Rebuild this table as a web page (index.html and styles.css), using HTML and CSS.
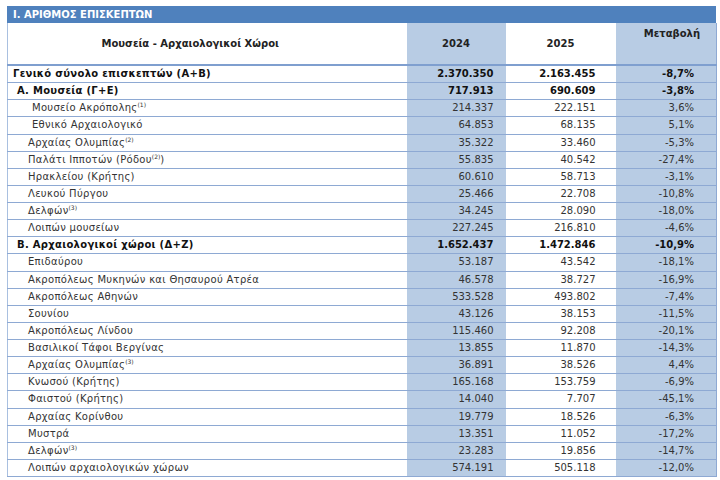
FILE: index.html
```html
<!DOCTYPE html>
<html lang="el">
<head>
<meta charset="utf-8">
<link rel="stylesheet" href="styles.css">
</head>
<body>
<div class="sheet">
  <div class="title">I. ΑΡΙΘΜΟΣ ΕΠΙΣΚΕΠΤΩΝ</div>
  <table class="grid">
    <colgroup>
      <col class="c-name"><col class="c-y1"><col class="c-y2"><col class="c-ch">
    </colgroup>
    <thead>
      <tr class="head">
        <th class="h-name">Μουσεία - Αρχαιολογικοί Χώροι</th>
        <th class="shade">2024</th>
        <th>2025</th>
        <th class="shade h-top">Μεταβολή</th>
      </tr>
    </thead>
    <tbody>
      <tr class="bold"><td class="l0">Γενικό σύνολο επισκεπτών (Α+Β)</td><td class="shade">2.370.350</td><td>2.163.455</td><td class="shade">-8,7%</td></tr>
      <tr class="bold"><td class="l1">Α. Μουσεία (Γ+Ε)</td><td class="shade">717.913</td><td>690.609</td><td class="shade">-3,8%</td></tr>
      <tr><td class="l3">Μουσείο Ακρόπολης<sup>(1)</sup></td><td class="shade">214.337</td><td>222.151</td><td class="shade">3,6%</td></tr>
      <tr><td class="l3">Εθνικό Αρχαιολογικό</td><td class="shade">64.853</td><td>68.135</td><td class="shade">5,1%</td></tr>
      <tr><td class="l2">Αρχαίας Ολυμπίας<sup>(2)</sup></td><td class="shade">35.322</td><td>33.460</td><td class="shade">-5,3%</td></tr>
      <tr><td class="l2">Παλάτι Ιπποτών (Ρόδου<sup>(2)</sup>)</td><td class="shade">55.835</td><td>40.542</td><td class="shade">-27,4%</td></tr>
      <tr><td class="l2">Ηρακλείου (Κρήτης)</td><td class="shade">60.610</td><td>58.713</td><td class="shade">-3,1%</td></tr>
      <tr><td class="l2">Λευκού Πύργου</td><td class="shade">25.466</td><td>22.708</td><td class="shade">-10,8%</td></tr>
      <tr><td class="l2">Δελφών<sup>(3)</sup></td><td class="shade">34.245</td><td>28.090</td><td class="shade">-18,0%</td></tr>
      <tr><td class="l2">Λοιπών μουσείων</td><td class="shade">227.245</td><td>216.810</td><td class="shade">-4,6%</td></tr>
      <tr class="bold"><td class="l1">Β. Αρχαιολογικοί χώροι (Δ+Ζ)</td><td class="shade">1.652.437</td><td>1.472.846</td><td class="shade">-10,9%</td></tr>
      <tr><td class="l2">Επιδαύρου</td><td class="shade">53.187</td><td>43.542</td><td class="shade">-18,1%</td></tr>
      <tr><td class="l2">Ακροπόλεως Μυκηνών και Θησαυρού Ατρέα</td><td class="shade">46.578</td><td>38.727</td><td class="shade">-16,9%</td></tr>
      <tr><td class="l2">Ακροπόλεως Αθηνών</td><td class="shade">533.528</td><td>493.802</td><td class="shade">-7,4%</td></tr>
      <tr><td class="l2">Σουνίου</td><td class="shade">43.126</td><td>38.153</td><td class="shade">-11,5%</td></tr>
      <tr><td class="l2">Ακροπόλεως Λίνδου</td><td class="shade">115.460</td><td>92.208</td><td class="shade">-20,1%</td></tr>
      <tr><td class="l2">Βασιλικοί Τάφοι Βεργίνας</td><td class="shade">13.855</td><td>11.870</td><td class="shade">-14,3%</td></tr>
      <tr><td class="l2">Αρχαίας Ολυμπίας<sup>(3)</sup></td><td class="shade">36.891</td><td>38.526</td><td class="shade">4,4%</td></tr>
      <tr><td class="l2">Κνωσού (Κρήτης)</td><td class="shade">165.168</td><td>153.759</td><td class="shade">-6,9%</td></tr>
      <tr><td class="l2">Φαιστού (Κρήτης)</td><td class="shade">14.040</td><td>7.707</td><td class="shade">-45,1%</td></tr>
      <tr><td class="l2">Αρχαίας Κορίνθου</td><td class="shade">19.779</td><td>18.526</td><td class="shade">-6,3%</td></tr>
      <tr><td class="l2">Μυστρά</td><td class="shade">13.351</td><td>11.052</td><td class="shade">-17,2%</td></tr>
      <tr><td class="l2">Δελφών<sup>(3)</sup></td><td class="shade">23.283</td><td>19.856</td><td class="shade">-14,7%</td></tr>
      <tr><td class="l2">Λοιπών αρχαιολογικών χώρων</td><td class="shade">574.191</td><td>505.118</td><td class="shade">-12,0%</td></tr>
    </tbody>
  </table>
</div>
</body>
</html>
```

FILE: styles.css
```css
html, body {
  margin: 0;
  padding: 0;
  background: #ffffff;
}

body {
  font-family: "DejaVu Sans", "Liberation Sans", sans-serif;
  font-size: 10px;
  color: #333333;
}

.sheet {
  width: 709px;
  margin: 6px 0 0 7px;
}

.title {
  height: 17px;
  line-height: 18px;
  background: #4f81bd;
  color: #ffffff;
  font-weight: bold;
  font-size: 10px;
  padding-left: 6px;
}

.grid {
  width: 709px;
  border-collapse: collapse;
  table-layout: fixed;
  border-left: 1px solid #a9c0e0;
  border-right: 1px solid #8ea9d3;
  border-bottom: 1px solid #8ea9d3;
}

.c-name { width: 399px; }
.c-y1 { width: 99px; }
.c-y2 { width: 110px; }
.c-ch { width: 101px; }

.head th {
  height: 36px;
  font-weight: bold;
  color: #222222;
  text-align: center;
  vertical-align: middle;
  padding: 0;
  border-bottom: 2px solid #7f9fcf;
}

.head .h-name {
  padding-right: 34px;
}

.head .h-top {
  vertical-align: top;
  padding-top: 5px;
  text-align: right;
  padding-right: 16px;
}

td {
  height: 16.13px;
  padding: 0;
  border-bottom: 1px solid #8ea9d3;
  text-align: right;
  white-space: nowrap;
  line-height: 16px;
}

td:nth-child(2) { padding-right: 12px; }
td:nth-child(3) { padding-right: 20px; }
td:nth-child(4) { padding-right: 22px; }

.shade {
  background: #b8cce4;
}

td.l0, td.l1, td.l2, td.l3 {
  text-align: left;
  letter-spacing: 0.3px;
}

.l0 { padding-left: 5px; }
.l1 { padding-left: 9px; }
.l2 { padding-left: 20px; }
.l3 { padding-left: 24px; }

.bold td {
  font-weight: bold;
  color: #111111;
}

sup {
  font-size: 6px;
  line-height: 0;
  vertical-align: 4px;
  letter-spacing: 0;
}
```
